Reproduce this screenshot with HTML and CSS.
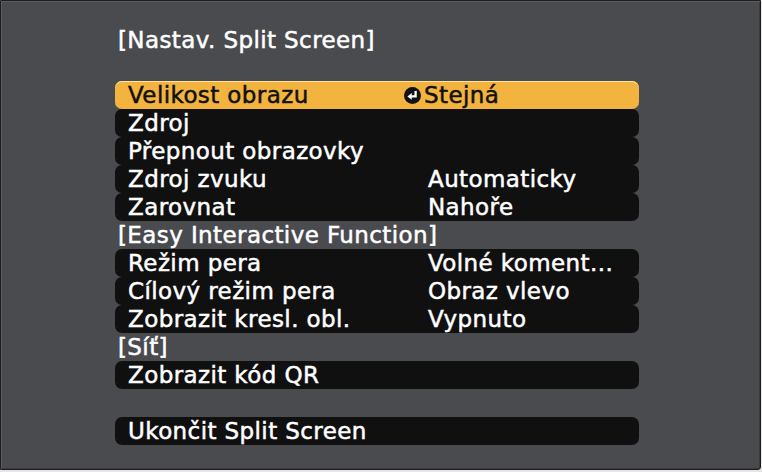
FILE: index.html
```html
<!DOCTYPE html>
<html lang="cs">
<head>
<meta charset="utf-8">
<title>Nastav. Split Screen</title>
<link rel="stylesheet" href="styles.css">
</head>
<body>
<div class="screen">
  <div class="title">[Nastav. Split Screen]</div>
  <div class="menu">
    <div class="row selected"><span class="label">Velikost obrazu</span><span class="value"><svg class="enter" viewBox="0 0 18 18" width="17" height="17"><circle cx="9" cy="9" r="9" fill="#111"/><path d="M12.3 4.2 V10 H7.5" fill="none" stroke="#fff" stroke-width="2.4"/><path d="M3.6 10 L8.2 6.4 V13.6 Z" fill="#fff"/></svg>Stejná</span></div>
    <div class="row"><span class="label">Zdroj</span><span class="value"></span></div>
    <div class="row"><span class="label">Přepnout obrazovky</span><span class="value"></span></div>
    <div class="row"><span class="label">Zdroj zvuku</span><span class="value">Automaticky</span></div>
    <div class="row"><span class="label">Zarovnat</span><span class="value">Nahoře</span></div>
    <div class="section">[Easy Interactive Function]</div>
    <div class="row"><span class="label">Režim pera</span><span class="value">Volné koment...</span></div>
    <div class="row"><span class="label">Cílový režim pera</span><span class="value">Obraz vlevo</span></div>
    <div class="row"><span class="label">Zobrazit kresl. obl.</span><span class="value">Vypnuto</span></div>
    <div class="section">[Síť]</div>
    <div class="row"><span class="label">Zobrazit kód QR</span><span class="value"></span></div>
    <div class="spacer"></div>
    <div class="row"><span class="label">Ukončit Split Screen</span><span class="value"></span></div>
  </div>
</div>
</body>
</html>
```
FILE: styles.css
```css
html, body {
  margin: 0;
  padding: 0;
  background: #e6e6e6;
}
body {
  width: 762px;
  height: 472px;
  overflow: hidden;
  font-family: "DejaVu Sans", Verdana, sans-serif;
}
.screen {
  box-sizing: border-box;
  width: 761px;
  height: 470px;
  background: #4a4b4f;
  border: 1px solid #1e1e20;
  box-shadow: inset 1px 1px 0 #5a5b60, inset -1px -1px 0 #3a3b3e;
  border-radius: 0 0 3px 0;
  padding: 25px 0 0 114px;
  color: #fff;
}
.title,
.section,
.row {
  font-size: 23px;
  line-height: 28px;
  height: 28px;
  letter-spacing: 0.4px;
  white-space: nowrap;
  -webkit-text-stroke: 0.5px #fff;
}
.title {
  padding-left: 3px;
  margin-bottom: 27px;
}
.menu {
  width: 524px;
  display: flex;
  flex-direction: column;
}
.row {
  display: grid;
  grid-template-columns: 300px 1fr;
  background: #101010;
  border-radius: 7px;
  padding-left: 13px;
  color: #fff;
}
.row.selected {
  background: #f3b43f;
  color: #111;
  -webkit-text-stroke: 0.5px #111;
  box-shadow: inset 0 1px 0 #ffe2a0;
}
.value {
  display: flex;
  align-items: center;
}
.enter {
  margin-left: -24px;
  margin-right: 3px;
  flex: none;
}
.section {
  padding-left: 3px;
}
.spacer {
  height: 28px;
}
```
